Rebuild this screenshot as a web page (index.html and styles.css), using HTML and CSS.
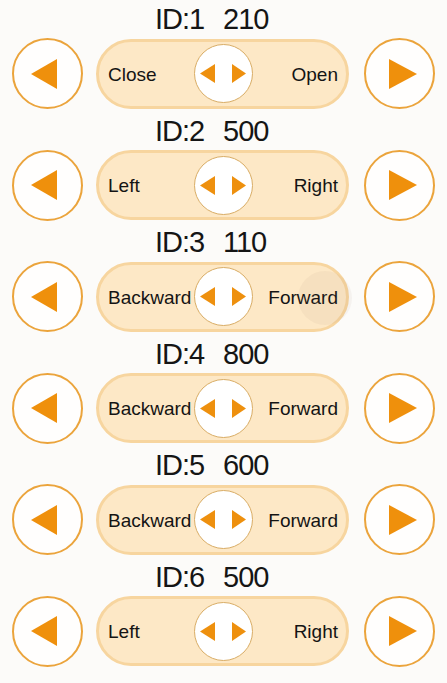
FILE: index.html
```html
<!DOCTYPE html>
<html>
<head>
<meta charset="utf-8">
<link rel="stylesheet" href="styles.css">
</head>
<body>
<div class="list">
  <div class="row">
    <div class="title"><span class="id">ID:1</span><span class="val">210</span></div>
    <div class="controls">
      <div class="round"><svg viewBox="0 0 26 30" class="tri"><polygon points="0,15 26,0 26,30"/></svg></div>
      <div class="pill"><span class="lab">Close</span><div class="knob"><svg viewBox="0 0 46 19" class="mini"><polygon points="0,9.5 15,0 15,19"/><polygon points="46,9.5 32,0 32,19"/></svg></div><span class="lab end">Open</span></div>
      <div class="round"><svg viewBox="0 0 28 30" class="tri r"><polygon points="28,15 0,0 0,30"/></svg></div>
    </div>
  </div>
  <div class="row">
    <div class="title"><span class="id">ID:2</span><span class="val">500</span></div>
    <div class="controls">
      <div class="round"><svg viewBox="0 0 26 30" class="tri"><polygon points="0,15 26,0 26,30"/></svg></div>
      <div class="pill"><span class="lab">Left</span><div class="knob"><svg viewBox="0 0 46 19" class="mini"><polygon points="0,9.5 15,0 15,19"/><polygon points="46,9.5 32,0 32,19"/></svg></div><span class="lab end">Right</span></div>
      <div class="round"><svg viewBox="0 0 28 30" class="tri r"><polygon points="28,15 0,0 0,30"/></svg></div>
    </div>
  </div>
  <div class="row">
    <div class="title"><span class="id">ID:3</span><span class="val">110</span></div>
    <div class="controls">
      <div class="round"><svg viewBox="0 0 26 30" class="tri"><polygon points="0,15 26,0 26,30"/></svg></div>
      <div class="pill"><span class="lab">Backward</span><div class="knob"><svg viewBox="0 0 46 19" class="mini"><polygon points="0,9.5 15,0 15,19"/><polygon points="46,9.5 32,0 32,19"/></svg></div><span class="lab end">Forward</span><span class="ripple"></span></div>
      <div class="round"><svg viewBox="0 0 28 30" class="tri r"><polygon points="28,15 0,0 0,30"/></svg></div>
    </div>
  </div>
  <div class="row">
    <div class="title"><span class="id">ID:4</span><span class="val">800</span></div>
    <div class="controls">
      <div class="round"><svg viewBox="0 0 26 30" class="tri"><polygon points="0,15 26,0 26,30"/></svg></div>
      <div class="pill"><span class="lab">Backward</span><div class="knob"><svg viewBox="0 0 46 19" class="mini"><polygon points="0,9.5 15,0 15,19"/><polygon points="46,9.5 32,0 32,19"/></svg></div><span class="lab end">Forward</span></div>
      <div class="round"><svg viewBox="0 0 28 30" class="tri r"><polygon points="28,15 0,0 0,30"/></svg></div>
    </div>
  </div>
  <div class="row">
    <div class="title"><span class="id">ID:5</span><span class="val">600</span></div>
    <div class="controls">
      <div class="round"><svg viewBox="0 0 26 30" class="tri"><polygon points="0,15 26,0 26,30"/></svg></div>
      <div class="pill"><span class="lab">Backward</span><div class="knob"><svg viewBox="0 0 46 19" class="mini"><polygon points="0,9.5 15,0 15,19"/><polygon points="46,9.5 32,0 32,19"/></svg></div><span class="lab end">Forward</span></div>
      <div class="round"><svg viewBox="0 0 28 30" class="tri r"><polygon points="28,15 0,0 0,30"/></svg></div>
    </div>
  </div>
  <div class="row">
    <div class="title"><span class="id">ID:6</span><span class="val">500</span></div>
    <div class="controls">
      <div class="round"><svg viewBox="0 0 26 30" class="tri"><polygon points="0,15 26,0 26,30"/></svg></div>
      <div class="pill"><span class="lab">Left</span><div class="knob"><svg viewBox="0 0 46 19" class="mini"><polygon points="0,9.5 15,0 15,19"/><polygon points="46,9.5 32,0 32,19"/></svg></div><span class="lab end">Right</span></div>
      <div class="round"><svg viewBox="0 0 28 30" class="tri r"><polygon points="28,15 0,0 0,30"/></svg></div>
    </div>
  </div>
</div>
</body>
</html>
```

FILE: styles.css
```css
html, body {
  margin: 0;
  padding: 0;
  background: #fcfbf9;
  font-family: "Liberation Sans", Arial, sans-serif;
  color: #111;
}
.list {
  display: flex;
  flex-direction: column;
}
.row {
  display: flex;
  flex-direction: column;
  height: 111.6px;
}
.title {
  height: 38px;
  line-height: 38px;
  font-size: 29px;
  letter-spacing: -1px;
  display: flex;
  padding-left: 155px;
  color: #151515;
}
.title .id {
  width: 68px;
}
.controls {
  height: 71px;
  display: flex;
  align-items: center;
  padding: 0 12px;
  gap: 13px;
}
.round {
  width: 67px;
  height: 67px;
  border: 2px solid #eba43c;
  border-radius: 50%;
  background: #fffefd;
  display: flex;
  align-items: center;
  justify-content: center;
  flex: none;
}
.tri {
  width: 26px;
  height: 30px;
  fill: #ef900c;
  margin-left: -7px;
}
.tri.r {
  width: 28px;
  height: 30px;
  margin-left: 6px;
}
.pill {
  position: relative;
  width: 246px;
  height: 64px;
  margin-right: 2px;
  border: 3px solid #f7d59f;
  border-radius: 35px;
  background: #fde8c6;
  display: flex;
  align-items: center;
  justify-content: space-between;
  padding: 0 8px 0 9px;
  box-sizing: content-box;
  font-size: 19px;
  color: #141414;
}
.pill .lab {
  flex: 1;
  padding-top: 2px;
}
.pill .lab.end {
  text-align: right;
}
.knob {
  width: 57px;
  height: 57px;
  border: 1px solid #d9ad66;
  border-radius: 50%;
  background: #ffffff;
  display: flex;
  align-items: center;
  justify-content: center;
  flex: none;
  margin: 0 -1px 0 -1px;
}
.mini {
  width: 46px;
  height: 19px;
  fill: #ee900e;
}
.ripple {
  position: absolute;
  right: -6px;
  top: 6px;
  width: 54px;
  height: 54px;
  border-radius: 50%;
  background: rgba(130, 110, 90, 0.06);
  pointer-events: none;
}
```
